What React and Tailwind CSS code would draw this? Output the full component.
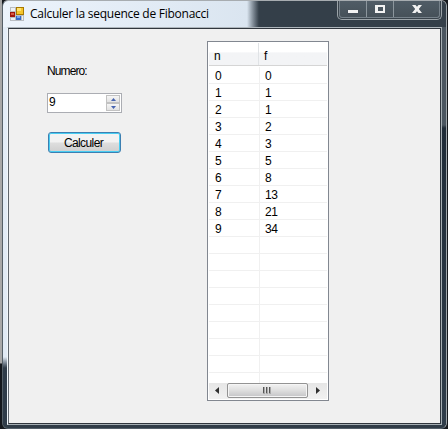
import React from "react";

const values = [0, 1, 1, 2, 3, 5, 8, 13, 21, 34];
const rows = Array.from({ length: 19 }, (_, n) => n);

function AppIcon() {
  return (
    <svg width="14" height="14" viewBox="0 0 14 14" className="block shrink-0" shapeRendering="crispEdges">
      <rect width="14" height="14" fill="#b9bdc2" />
      <rect x="1" y="1" width="4" height="3" fill="#edf1f5" />
      <rect x="1" y="11" width="4" height="2" fill="#edf1f5" />
      <rect x="12" y="9" width="1" height="4" fill="#edf1f5" />
      <rect x="6" y="0" width="8" height="8" fill="#a87900" />
      <rect x="7" y="1" width="6" height="6" fill="#f5c52c" />
      <rect x="7" y="1" width="4" height="3" fill="#ffe272" />
      <rect x="0" y="5" width="5" height="5" fill="#a0160c" />
      <rect x="1" y="6" width="3" height="2" fill="#d65a45" />
      <rect x="6" y="9" width="5" height="4" fill="#3569c8" />
      <rect x="7" y="9" width="3" height="2" fill="#79a7ef" />
    </svg>
  );
}

function CaptionButtons() {
  return (
    <div className="mr-[4px] flex h-[19px] w-[105px] rounded-b-[5px] border border-t-0 border-[#9ba3a8] bg-[#39434b] p-px pt-0">
      <div className="flex w-full overflow-hidden rounded-b-[3px] border border-t-0 border-[#76818a] bg-linear-to-b from-[#505c66] to-[#465159]">
        <div className="flex w-[27px] justify-center border-r border-[#8c969d] pt-[9px]">
          <svg width="12" height="5" viewBox="0 0 12 5" shapeRendering="crispEdges">
            <rect width="12" height="5" fill="#46505a" />
            <rect x="1" width="10" height="3" fill="#f2f2f2" />
          </svg>
        </div>
        <div className="flex w-[27px] justify-center border-r border-[#8c969d] pt-[4px] pr-px">
          <svg width="10" height="8" viewBox="0 0 10 8" shapeRendering="crispEdges">
            <path d="M0 0H10V8H0ZM3 2V6H8V2Z" fill="#f2f2f2" fillRule="evenodd" />
          </svg>
        </div>
        <div className="flex flex-1 justify-center pt-[4px] pl-px">
          <svg width="10" height="8" viewBox="0 0 10 8">
            <path d="M0 0H3.5L5 1.8L6.5 0H10L6.8 4L10 8H6.5L5 6.2L3.5 8H0L3.2 4Z" fill="#f2f2f2" />
          </svg>
        </div>
      </div>
    </div>
  );
}

function SpinButton({ up }) {
  return (
    <div className="flex h-[8px] w-[14px] items-center justify-center border border-[#c2c2c2] bg-linear-to-b from-[#f6f6f6] to-[#e2e2e2]">
      <svg width="5" height="3" viewBox="0 0 5 3" className="block">
        <path d={up ? "M0 3L2.5 0L5 3Z" : "M0 0H5L2.5 3Z"} fill="#4764b0" />
      </svg>
    </div>
  );
}

function Controls() {
  return (
    <div className="ml-[38px] w-[75px] font-['Liberation_Sans',Arial,sans-serif] text-[12px] text-black">
      <div className="mt-[35px] h-[14px] leading-[14px] tracking-[-0.9px] whitespace-nowrap">Numero:</div>
      <div className="mt-[15px] flex h-[20px] border border-[#abadb3] bg-white">
        <div className="flex-1 pl-px leading-[16px]">9</div>
        <div className="mt-px mr-px flex flex-col">
          <SpinButton up />
          <SpinButton />
        </div>
      </div>
      <button className="mt-[19px] ml-px block h-[21px] w-[73px] rounded-[3px] border border-[#3c7fb1] bg-linear-to-b from-[#f2f2f2] from-45% via-[#dddddd] via-55% to-[#cfcfcf] shadow-[inset_0_0_0_1px_#48cdf2] tracking-[-0.6px] leading-[20px]">
        <span className="block pr-[2px]">Calculer</span>
      </button>
    </div>
  );
}

function ListScrollbar() {
  return (
    <div className="flex h-[16px] items-center bg-linear-to-b from-[#e6e6e6] to-[#f1f1f1]">
      <div className="flex w-[18px] justify-center pr-[2px]">
        <svg width="4" height="7" viewBox="0 0 4 7" className="mb-px"><path d="M4 0V7L0 3.5Z" fill="#303030" /></svg>
      </div>
      <div className="flex h-[15px] w-[81px] items-center justify-center self-start rounded-[2px] border border-[#939393] bg-linear-to-b from-[#f2f2f2] via-[#dedede] to-[#c4c4c6] shadow-[inset_0_0_0_1px_#f5f5f5]">
        <svg width="8" height="7" viewBox="0 0 8 7" shapeRendering="crispEdges" className="mr-px">
          <path d="M0 0H2V7H0ZM3 0H5V7H3ZM6 0H8V7H6Z" fill="#a8a8a8" />
          <path d="M0 0H1V6H0ZM3 0H4V6H3ZM6 0H7V6H6Z" fill="#555" />
        </svg>
      </div>
      <div className="flex flex-1 justify-center pl-px">
        <svg width="4" height="7" viewBox="0 0 4 7" className="mb-px"><path d="M0 0V7L4 3.5Z" fill="#303030" /></svg>
      </div>
    </div>
  );
}

function FibonacciList() {
  return (
    <div className="mt-[12px] ml-[85px] flex h-[360px] w-[122px] flex-col border border-[#828790] bg-white p-px font-['Liberation_Sans',Arial,sans-serif] text-[12px] tracking-[-0.4px] text-black">
      <div className="flex h-[23px] shrink-0 border-b border-[#d5d5d5] bg-linear-to-b from-white from-40% to-[#f3f4f6] to-45% leading-[26px]">
        <div className="w-[50px] border-r border-[#e0e3e6] pl-[5px]">n</div>
        <div className="pl-[5px]">f</div>
      </div>
      <div className="h-[317px] overflow-hidden pt-px">
        {rows.map((n) => (
          <div key={n} className="flex h-[17px] border-b border-[#f0f0f0] leading-[18px]">
            <div className="w-[51px] border-r border-[#f0f0f0] pl-[6px]">{n < 10 ? n : ""}</div>
            <div className="pl-[5px]">{values[n]}</div>
          </div>
        ))}
      </div>
      <ListScrollbar />
    </div>
  );
}

export default function App() {
  return (
    <div className="flex h-[429px] w-[448px] overflow-hidden bg-[#16191d]">
      <div className="w-[2px] shrink-0 bg-linear-to-b from-[#a8a8a8] from-[363px] to-[#14171c] to-[364px]" />
      <div className="flex w-[445px] shrink-0 flex-col rounded-[6px] border border-t-[#a7acb0] border-r-[#9fa6aa] border-b-[#56616b] border-l-[#555f67] bg-[#303c47]">
        <div className="flex h-[26px] shrink-0 rounded-t-[5px] bg-linear-to-r from-[#edf4fc] from-[0px] via-[#dae5f0] via-[244px] to-[#343f49] to-[256px]">
          <div className="flex flex-1 pt-[6px] pl-[7px]">
            <AppIcon />
            <span className="ml-[6px] font-['Open_Sans','Noto_Sans',sans-serif] text-[12px] leading-[14px] tracking-[-0.26px] whitespace-nowrap text-black">Calculer la sequence de Fibonacci</span>
          </div>
          <CaptionButtons />
        </div>
        <div className="flex h-[398px] shrink-0">
          <div className="w-[4px] shrink-0 bg-linear-to-b from-[#e5eef8] from-[0px] via-[#e1eaf4] via-[330px] to-[#303c49] to-[341px]" />
          <div className="w-[435px] border border-t-[#aeb6bc] border-r-[#a5aeb3] border-b-[#a5aeb3] border-l-[#f2f7fb]">
            <div className="flex h-full border border-[#30363d] border-l-[#60666d] bg-[#f0f0f0]">
              <Controls />
              <FibonacciList />
            </div>
          </div>
          <div className="flex-1 bg-linear-to-b from-[#4b5660] from-[98px] via-[#202c38] via-[101px] to-[#303d4a]" />
        </div>
      </div>
    </div>
  );
}
